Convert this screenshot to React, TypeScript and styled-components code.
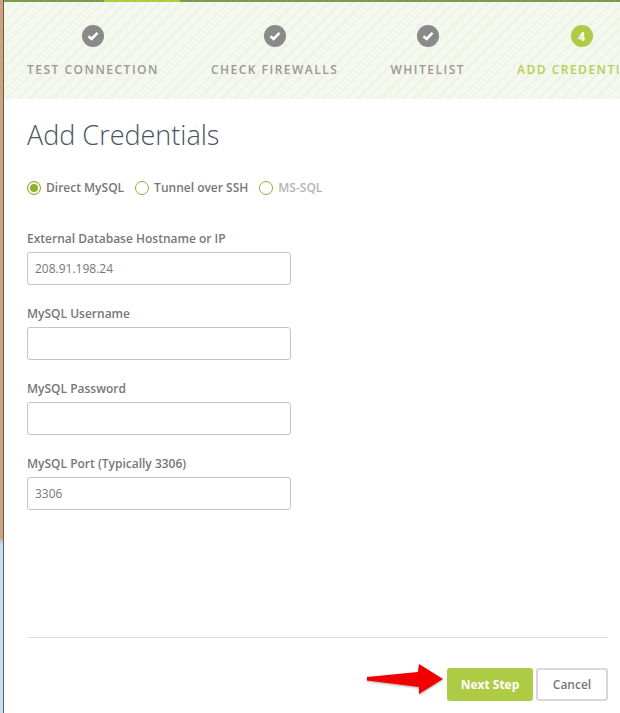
import React from "react";
import styled, {createGlobalStyle} from "styled-components";

const GlobalStyle = createGlobalStyle`
  html, body {
    margin: 0;
    padding: 0;
    background: #fff;
  }
  body {
    font-family: "Open Sans", "Liberation Sans", sans-serif;
    overflow: hidden;
  }
`

const steps = [
    {label: "TEST CONNECTION", done: true},
    {label: "CHECK FIREWALLS", done: true},
    {label: "WHITELIST", done: true},
    {label: "ADD CREDENTIALS", done: false, num: 4},
];

const radios = [
    {label: "Direct MySQL", checked: true},
    {label: "Tunnel over SSH"},
    {label: "MS-SQL", muted: true},
];

const fields = [
    {label: "External Database Hostname or IP", value: "208.91.198.24"},
    {label: "MySQL Username", value: ""},
    {label: "MySQL Password", value: ""},
    {label: "MySQL Port (Typically 3306)", value: "3306"},
];

function App() {
    return (
        <Page>
            <GlobalStyle/>
            <EdgeStrip/>
            <Panel>
                <TopBar><TopBarActive/></TopBar>
                <Steps>
                    {steps.map((s) => (
                        <Step key={s.label}>
                            <Badge $active={!s.done}>
                                {s.done ? (
                                    <svg width="12" height="10" viewBox="0 0 12 10">
                                        <path d="M1.5 5.2 L4.6 8 L10.5 1.8" fill="none" stroke="#fff" strokeWidth="2.6"/>
                                    </svg>
                                ) : s.num}
                            </Badge>
                            <StepLabel $active={!s.done}>{s.label}</StepLabel>
                        </Step>
                    ))}
                </Steps>
                <Content>
                    <Title>Add Credentials</Title>
                    <RadioRow>
                        {radios.map((r) => (
                            <RadioItem key={r.label} $muted={r.muted}>
                                <RadioCircle $checked={r.checked}/>
                                {r.label}
                            </RadioItem>
                        ))}
                    </RadioRow>
                    <Fields>
                        {fields.map((f) => (
                            <Field key={f.label}>
                                <FieldLabel>{f.label}</FieldLabel>
                                <Input defaultValue={f.value}/>
                            </Field>
                        ))}
                    </Fields>
                    <Footer>
                        <Arrow width="82" height="42" viewBox="0 0 82 42">
                            <defs>
                                <filter id="arrowShadow" x="-10%" y="-20%" width="120%" height="150%">
                                    <feDropShadow dx="0" dy="1" stdDeviation="1" floodColor="#000" floodOpacity="0.35"/>
                                </filter>
                            </defs>
                            <path d="M1 16 L52 11 L53 3 L77 18 L53 33 L53 26 L1 19.5 Z" fill="#f00000" filter="url(#arrowShadow)"/>
                        </Arrow>
                        <NextButton>Next Step</NextButton>
                        <CancelButton>Cancel</CancelButton>
                    </Footer>
                </Content>
            </Panel>
        </Page>
    )
}

export default App;

const Page = styled.div`
  width: 620px;
  height: 713px;
  display: flex;
  overflow: hidden;
`
const EdgeStrip = styled.div`
  width: 3px;
  flex: none;
  border-right: 1px solid #5f5f5f;
  background: linear-gradient(to bottom, #cfa27c 0, #cfa27c 538px, #c4e0f2 544px, #c4e0f2 100%);
`
const Panel = styled.div`
  flex: 1;
  min-width: 0;
  display: flex;
  flex-direction: column;
`
const TopBar = styled.div`
  height: 2px;
  flex: none;
  background-color: #7a9a50;
  padding-left: 100px;
`
const TopBarActive = styled.div`
  width: 76px;
  height: 2px;
  background-color: #aecb45;
`
const Steps = styled.div`
  height: 97px;
  flex: none;
  display: flex;
  gap: 52px;
  padding-left: 23px;
  overflow: hidden;
  background-color: #f5f8ee;
  background-image: repeating-linear-gradient(135deg, #f5f8ee 0, #f5f8ee 5px, #f0f4e6 5px, #f0f4e6 8px);
`
const Step = styled.div`
  flex: none;
  display: flex;
  flex-direction: column;
  align-items: center;
  padding-top: 23px;
`
const Badge = styled.div<{$active?: boolean}>`
  width: 22px;
  height: 22px;
  border-radius: 50%;
  display: flex;
  align-items: center;
  justify-content: center;
  background-color: ${(p) => (p.$active ? "#aecb45" : "#8a8a8a")};
  color: #fff;
  font-size: 12px;
  font-weight: 700;
`
const StepLabel = styled.div<{$active?: boolean}>`
  margin-top: 15px;
  font-size: 12px;
  line-height: 16px;
  font-weight: 600;
  letter-spacing: 1.5px;
  white-space: nowrap;
  color: ${(p) => (p.$active ? "#b3cf55" : "#999999")};
`
const Content = styled.div`
  flex: 1;
  display: flex;
  flex-direction: column;
  padding: 0 12px 0 23px;
`
const Title = styled.h1`
  margin: 18px 0 0;
  font-size: 27px;
  line-height: 36px;
  font-weight: 300;
  color: #4a5560;
`
const RadioRow = styled.div`
  display: flex;
  gap: 11px;
  margin-top: 27px;
`
const RadioItem = styled.div<{$muted?: boolean}>`
  display: flex;
  align-items: center;
  gap: 5px;
  font-size: 12px;
  line-height: 16px;
  font-weight: 600;
  color: ${(p) => (p.$muted ? "#b5b5b5" : "#777777")};
`
const RadioCircle = styled.span<{$checked?: boolean}>`
  width: 14px;
  height: 14px;
  box-sizing: border-box;
  border-radius: 50%;
  border: 1px solid #8fae3a;
  background-color: ${(p) => (p.$checked ? "#8fb02e" : "#fff")};
  box-shadow: ${(p) => (p.$checked ? "inset 0 0 0 2px #fff" : "none")};
`
const Fields = styled.div`
  display: flex;
  flex-direction: column;
  gap: 21px;
  margin-top: 35px;
`
const Field = styled.div`
  display: flex;
  flex-direction: column;
  gap: 5px;
`
const FieldLabel = styled.label`
  font-size: 12px;
  line-height: 16px;
  font-weight: 600;
  color: #777777;
`
const Input = styled.input`
  width: 264px;
  height: 33px;
  box-sizing: border-box;
  padding: 0 7px;
  border: 1px solid #c4c4c4;
  border-radius: 3px;
  background: #fff;
  font-family: inherit;
  font-size: 12px;
  color: #777777;
  outline: none;
`
const Footer = styled.div`
  position: relative;
  margin-top: 127px;
  padding-top: 30px;
  border-top: 1px solid #dedede;
  display: flex;
  justify-content: flex-end;
  gap: 3px;
`
const Arrow = styled.svg`
  position: absolute;
  left: 339px;
  top: 23px;
`
const NextButton = styled.button`
  width: 86px;
  height: 33px;
  border: none;
  border-radius: 3px;
  background-color: #aecb45;
  color: #fff;
  font-family: inherit;
  font-size: 12px;
  font-weight: 700;
`
const CancelButton = styled.button`
  width: 72px;
  height: 33px;
  box-sizing: border-box;
  border: 2px solid #d8d8d8;
  border-radius: 3px;
  background: #fff;
  color: #777777;
  font-family: inherit;
  font-size: 12px;
  font-weight: 600;
`
